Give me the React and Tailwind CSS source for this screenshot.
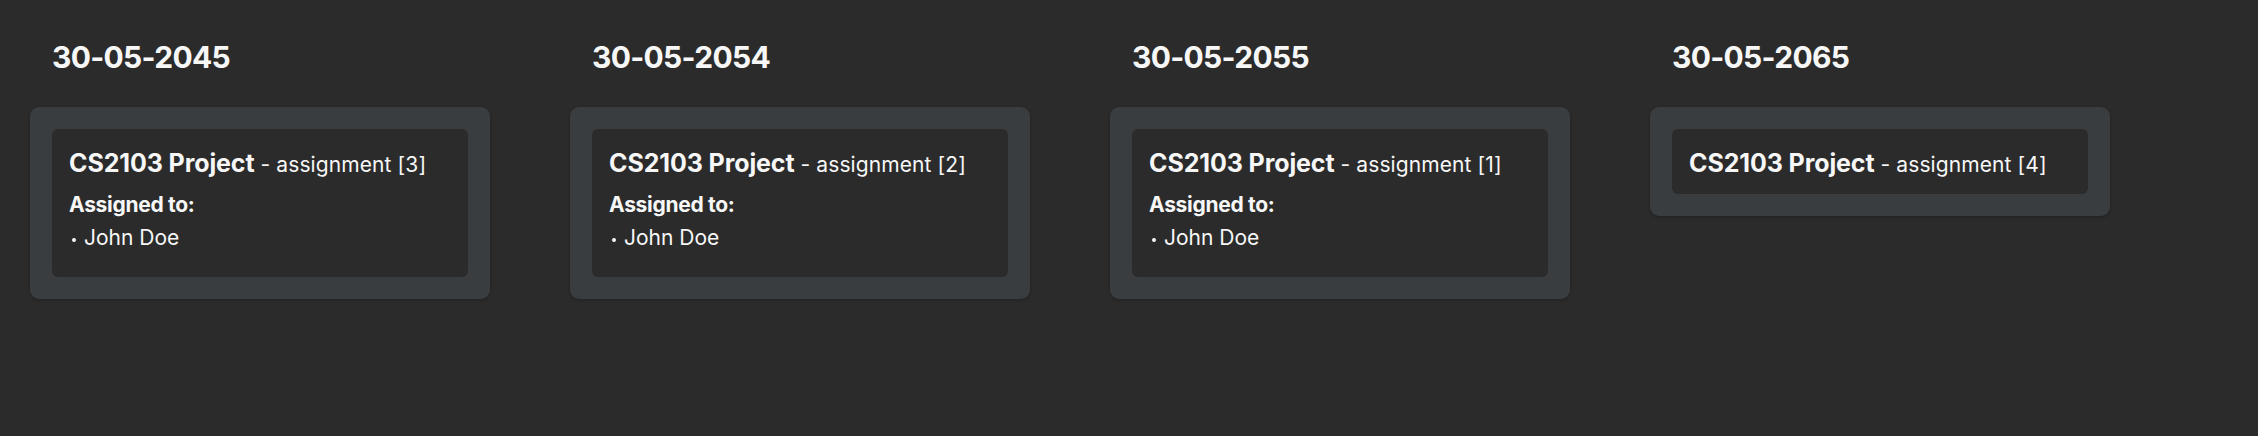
export default function App() {
  const cols = [
    { date: "30-05-2045", n: 3, assigned: ["John Doe"] },
    { date: "30-05-2054", n: 2, assigned: ["John Doe"] },
    { date: "30-05-2055", n: 1, assigned: ["John Doe"] },
    { date: "30-05-2065", n: 4, assigned: [] },
  ];
  return (
    <div
      className="w-[2258px] h-[436px] bg-[#2b2b2b] text-[#f7f7f7] pl-[30px] pt-[39px] flex items-start gap-[80px]"
      style={{ fontFamily: "Inter, 'Noto Sans', sans-serif" }}
    >
      {cols.map((c) => (
        <div key={c.date} className="w-[460px] flex flex-col">
          <h2 className="px-[22px] text-[30px] leading-[36px] font-bold tracking-[-0.7px]">{c.date}</h2>
          <div className="mt-[32px] bg-[#3a3d40] rounded-[9px] p-[22px] shadow-[0_1px_3px_rgba(0,0,0,0.25)]">
            <div className="bg-[#2b2b2b] rounded-[6px] px-[17px] pt-[18px] pb-[15px]">
              <div className="text-[25px] leading-[32px] whitespace-nowrap">
                <span className="font-bold tracking-[-0.1px]">CS2103 Project</span>
                <span className="text-[21px] leading-none font-normal tracking-[0.1px]"> - assignment [{c.n}]</span>
              </div>
              {c.assigned.length > 0 && (
                <div className="mt-[12px] mb-[10px]">
                  <div className="text-[21px] leading-[28px] font-bold tracking-[-0.3px]">Assigned to:</div>
                  <ul className="mt-[5px]">
                    {c.assigned.map((a) => (
                      <li key={a} className="text-[21px] leading-[28px] font-normal tracking-[0px] flex items-center">
                        <span className="ml-[3px] mr-[8px] mt-[3px] w-[4px] h-[4px] rounded-full bg-[#f7f7f7]" />
                        <span>{a}</span>
                      </li>
                    ))}
                  </ul>
                </div>
              )}
            </div>
          </div>
        </div>
      ))}
    </div>
  );
}
